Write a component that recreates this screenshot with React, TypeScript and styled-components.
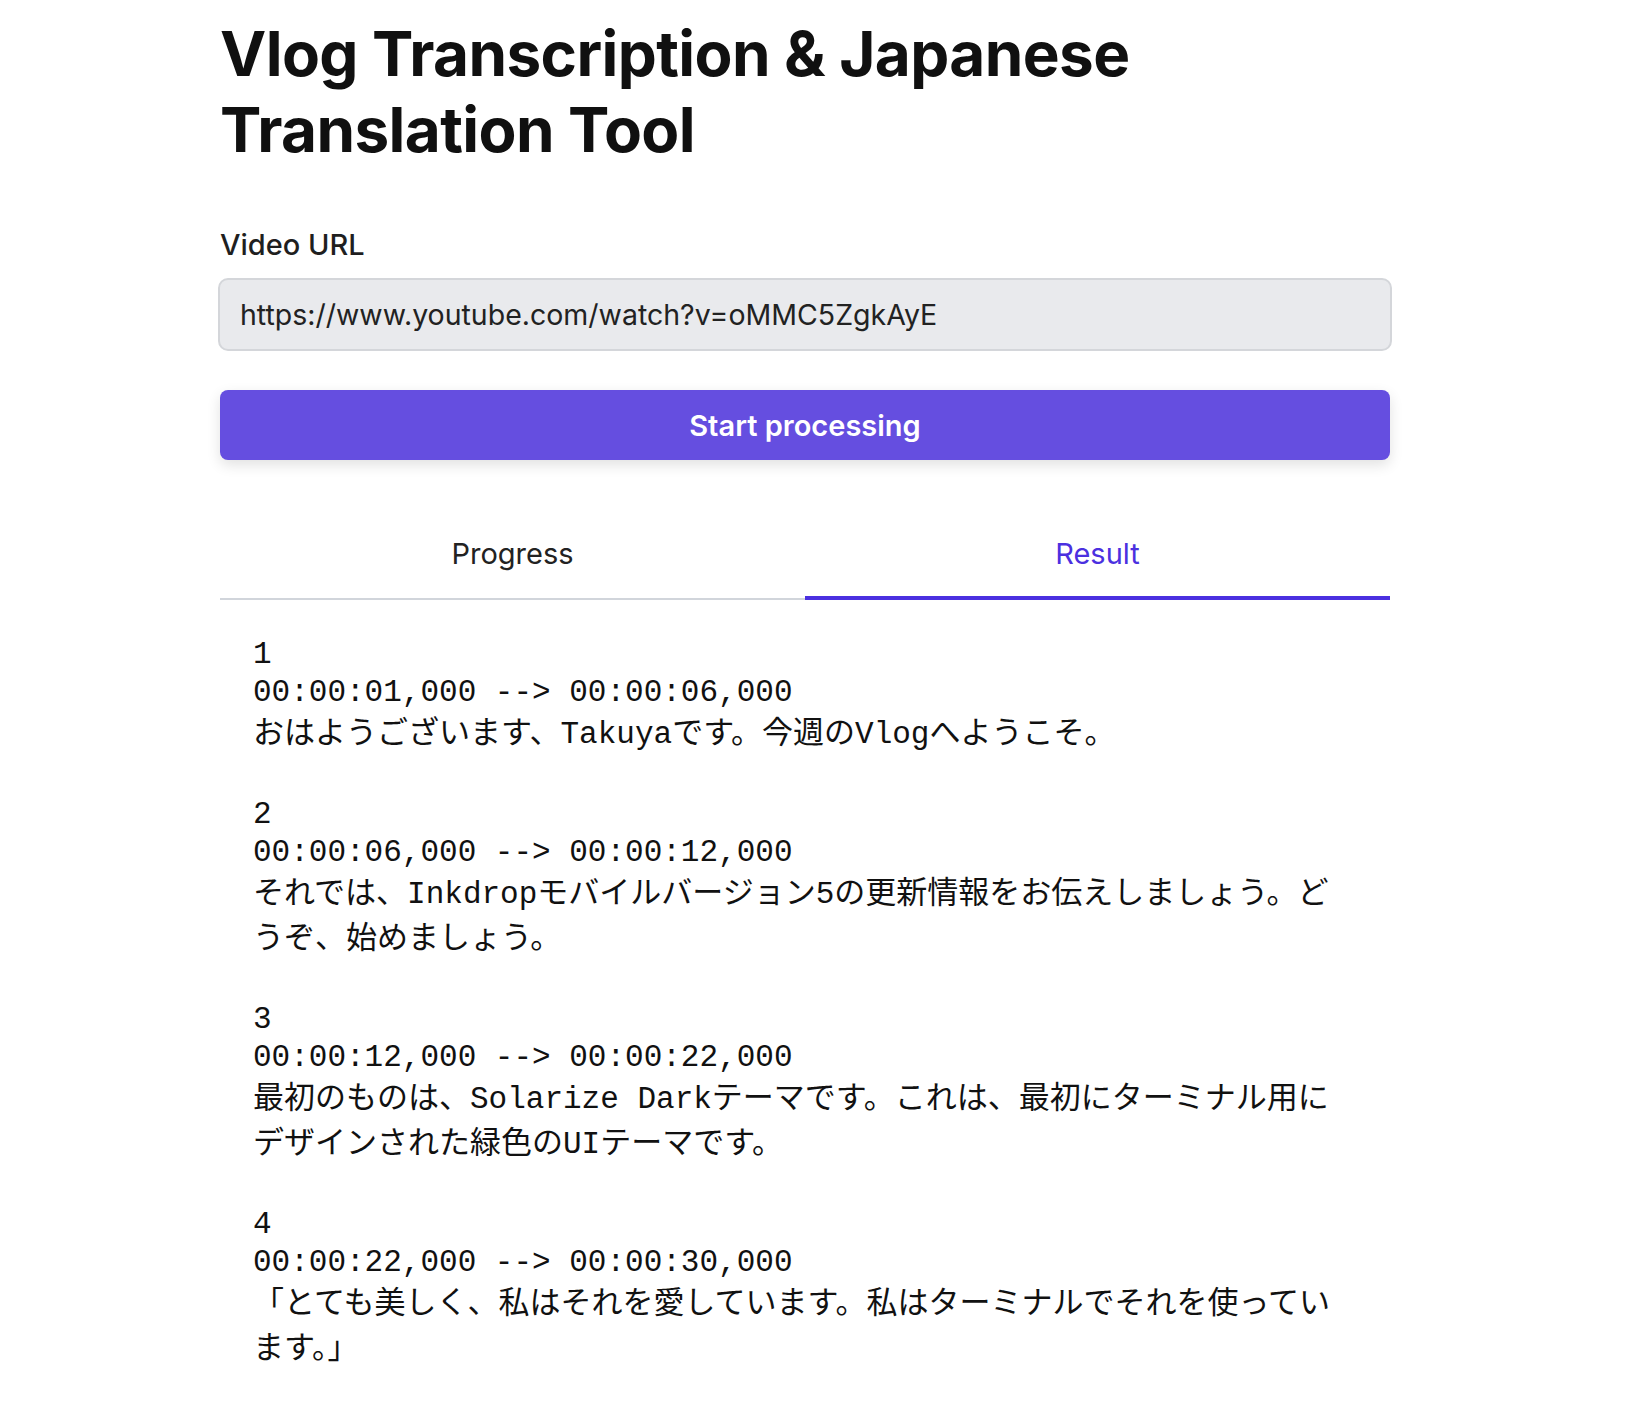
import React, { useState } from 'react';
import styled, { createGlobalStyle } from 'styled-components';

const GlobalStyle = createGlobalStyle`
  html, body {
    margin: 0;
    padding: 0;
    background: #fff;
  }
  body {
    font-family: Inter, "Noto Sans", "Noto Sans CJK JP", sans-serif;
    color: #1c1c1c;
  }
`;

const Page = styled.main`
  width: 1170px;
  margin-left: 220px;
  padding-bottom: 40px;
`;

const Title = styled.h1`
  margin: 16px 0 0;
  font-size: 62px;
  line-height: 76px;
  font-weight: 700;
  letter-spacing: -0.6px;
  color: #101010;
`;

const Field = styled.div`
  margin-top: 59px;
  display: flex;
  flex-direction: column;
  gap: 15px;
`;

const Label = styled.label`
  font-size: 29px;
  line-height: 36px;
  font-weight: 500;
  color: #1f1f1f;
`;

const UrlInput = styled.input`
  box-sizing: border-box;
  width: calc(100% + 4px);
  height: 73px;
  margin-left: -2px;
  padding: 0 20px;
  border: 2px solid #d4d6da;
  border-radius: 10px;
  background: #e9eaed;
  font-family: Inter, sans-serif;
  font-size: 28.5px;
  color: #222;
  outline: none;
`;

const PrimaryButton = styled.button`
  display: block;
  width: 100%;
  height: 70px;
  margin-top: 39px;
  border: none;
  border-radius: 8px;
  background: #654ee0;
  color: #fff;
  font-family: Inter, sans-serif;
  font-size: 29px;
  font-weight: 600;
  box-shadow: 0 5px 14px rgba(0, 0, 0, 0.12);
  cursor: pointer;
`;

const Tabs = styled.div`
  display: flex;
  margin-top: 55px;
`;

const Tab = styled.button<{ $active: boolean }>`
  flex: 1;
  box-sizing: border-box;
  height: 85px;
  padding: 0 0 ${(p) => (p.$active ? '4px' : '6px')};
  background: none;
  border: none;
  border-bottom: ${(p) => (p.$active ? '4px solid #4b30e0' : '2px solid #d1d5db')};
  color: ${(p) => (p.$active ? '#4b30e0' : '#222')};
  font-family: Inter, sans-serif;
  font-size: 29px;
  font-weight: 400;
  cursor: pointer;
`;

const Subtitles = styled.section`
  padding: 36px 32px 0 33px;
  font-family: "Liberation Mono", "Noto Sans CJK JP", monospace;
  font-size: 31px;
  color: #111;
  display: flex;
  flex-direction: column;
  gap: 38px;
`;

const Cue = styled.div`
  display: flex;
  flex-direction: column;
`;

const MonoLine = styled.div`
  line-height: 38px;
  white-space: pre;
`;

const CueText = styled.div`
  line-height: 45.5px;
`;

type Entry = { index: number; start: string; end: string; text: string };

const entries: Entry[] = [
  {
    index: 1,
    start: '00:00:01,000',
    end: '00:00:06,000',
    text: 'おはようございます、Takuyaです。今週のVlogへようこそ。',
  },
  {
    index: 2,
    start: '00:00:06,000',
    end: '00:00:12,000',
    text: 'それでは、Inkdropモバイルバージョン5の更新情報をお伝えしましょう。どうぞ、始めましょう。',
  },
  {
    index: 3,
    start: '00:00:12,000',
    end: '00:00:22,000',
    text: '最初のものは、Solarize Darkテーマです。これは、最初にターミナル用にデザインされた緑色のUIテーマです。',
  },
  {
    index: 4,
    start: '00:00:22,000',
    end: '00:00:30,000',
    text: '「とても美しく、私はそれを愛しています。私はターミナルでそれを使っています。」',
  },
];

const App: React.FC = () => {
  const [tab, setTab] = useState<'progress' | 'result'>('result');
  const [url, setUrl] = useState('https://www.youtube.com/watch?v=oMMC5ZgkAyE');

  return (
    <>
      <GlobalStyle />
      <Page>
        <Title>
          Vlog Transcription &amp; Japanese
          <br />
          Translation Tool
        </Title>

        <Field>
          <Label htmlFor="video-url">Video URL</Label>
          <UrlInput id="video-url" type="text" value={url} onChange={(e) => setUrl(e.target.value)} />
        </Field>

        <PrimaryButton>Start processing</PrimaryButton>

        <Tabs>
          <Tab $active={tab === 'progress'} onClick={() => setTab('progress')}>Progress</Tab>
          <Tab $active={tab === 'result'} onClick={() => setTab('result')}>Result</Tab>
        </Tabs>

        {tab === 'result' && (
          <Subtitles>
            {entries.map((e) => (
              <Cue key={e.index}>
                <MonoLine>{e.index}</MonoLine>
                <MonoLine>{`${e.start} --> ${e.end}`}</MonoLine>
                <CueText>{e.text}</CueText>
              </Cue>
            ))}
          </Subtitles>
        )}
      </Page>
    </>
  );
};

export default App;
